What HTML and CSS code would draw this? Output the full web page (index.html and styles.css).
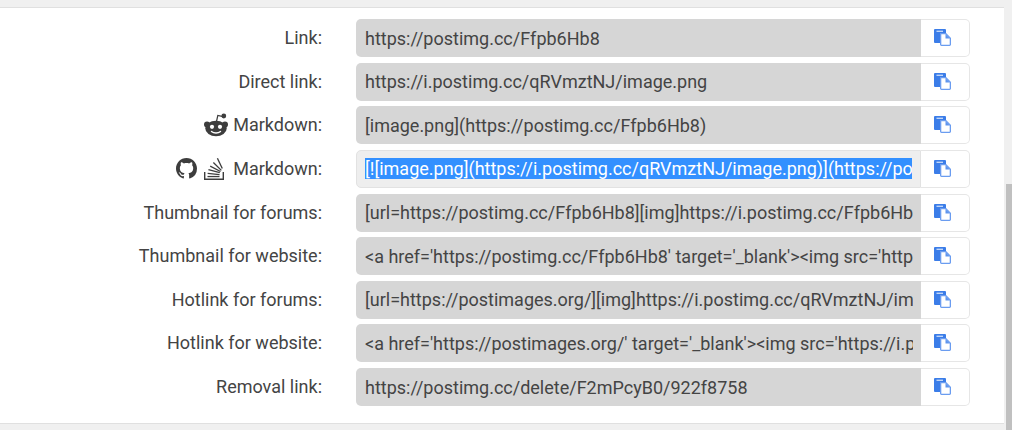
FILE: index.html
```html
<!DOCTYPE html>
<html lang="en">
<head>
<meta charset="utf-8">
<title>Links</title>
<link rel="stylesheet" href="styles.css">
</head>
<body>
<svg class="defs" width="0" height="0" aria-hidden="true">
  <symbol id="copy" viewBox="0 0 17 17">
    <path fill="#3b7de8" d="M1 0h10a1 1 0 0 1 1 1v3H6v10H1a1 1 0 0 1-1-1V1a1 1 0 0 1 1-1z"/>
    <rect x="2.500" y="1.700" width="6.500" height="1.100" fill="#e3edfc"/>
    <path fill="#fff" stroke="#6a9cf0" stroke-width="1.300" d="M6.650 4.650h5.200l4.500 4.500v6.400a.8.800 0 0 1-.8.800H7.450a.8.800 0 0 1-.8-.8z"/>
    <path fill="#5f95ee" d="M11.500 5v4.600h4.600z"/>
  </symbol>
</svg>
<main class="panel">
  <div class="row">
    <label class="name">Link:</label>
    <div class="field"><span class="value">https://postimg.cc/Ffpb6Hb8</span></div>
    <button class="copy"><svg class="copy-icon"><use href="#copy"/></svg></button>
  </div>
  <div class="row">
    <label class="name">Direct link:</label>
    <div class="field"><span class="value">https://i.postimg.cc/qRVmztNJ/image.png</span></div>
    <button class="copy"><svg class="copy-icon"><use href="#copy"/></svg></button>
  </div>
  <div class="row">
    <label class="name">
      <svg class="brand reddit" viewBox="0 0 24 24">
        <g fill="#3d3d3d">
          <circle cx="3" cy="11.500" r="3"/>
          <circle cx="21" cy="11.500" r="3"/>
          <ellipse cx="12" cy="15.500" rx="10.700" ry="7.800"/>
          <circle cx="19.800" cy="3" r="2.400"/>
        </g>
        <path fill="none" stroke="#3d3d3d" stroke-width="1.200" d="M12.500 8.500l1.300-6 5.500 1.100"/>
        <circle cx="8" cy="13.800" r="2.100" fill="#fff"/>
        <circle cx="16" cy="13.800" r="2.100" fill="#fff"/>
        <path fill="none" stroke="#fff" stroke-width="1.400" stroke-linecap="round" d="M7.500 18.500c2.500 2 6.500 2 9 0"/>
      </svg>
      <span>Markdown:</span>
    </label>
    <div class="field"><span class="value">[image.png](https://postimg.cc/Ffpb6Hb8)</span></div>
    <button class="copy"><svg class="copy-icon"><use href="#copy"/></svg></button>
  </div>
  <div class="row">
    <label class="name">
      <svg class="brand github" viewBox="0 0 16 16"><path fill="#3d3d3d" d="M8 0C3.580 0 0 3.580 0 8c0 3.540 2.290 6.530 5.470 7.590.4.070.55-.17.55-.38 0-.19-.01-.82-.01-1.490-2.010.37-2.530-.49-2.690-.94-.09-.23-.48-.94-.82-1.130-.28-.15-.68-.52-.01-.53.63-.01 1.080.58 1.230.82.720 1.210 1.870.87 2.330.66.070-.52.280-.87.510-1.070-1.780-.2-3.640-.89-3.640-3.950 0-.87.310-1.590.820-2.150-.08-.2-.36-1.020.08-2.120 0 0 .67-.21 2.200.82.640-.18 1.320-.27 2-.27s1.360.09 2 .27c1.530-1.040 2.200-.82 2.200-.82.440 1.100.16 1.920.08 2.120.51.560.82 1.270.82 2.150 0 3.070-1.870 3.750-3.650 3.950.29.250.54.730.54 1.480 0 1.070-.01 1.930-.01 2.200 0 .21.150.46.550.38A8.010 8.010 0 0 0 16 8c0-4.420-3.580-8-8-8z"/></svg>
      <svg class="brand stack" viewBox="0 0 20 23"><g fill="#3d3d3d"><path d="M0 15h1.400v6.600h17.200V15H20v8H0z"/><path d="M3.500 18.900h12v1.300h-12z"/><path d="M3.700 15.700l11.900 1.300-.15 1.300-11.900-1.300z"/><path d="M4.600 12l11.400 3-.35 1.300-11.400-3z"/><path d="M6.500 8.500l10.300 5.400-.6 1.150-10.300-5.400z"/><path d="M9.800 5l8 7.900-.9.950-8-7.900z"/><path d="M14 1l4.900 10.300-1.200.55L12.800 1.550z"/></g></svg>
      <span>Markdown:</span>
    </label>
    <div class="field selected"><span class="value"><span class="hl">[![image.png](https://i.postimg.cc/qRVmztNJ/image.png)](https://postimg.cc/Ffpb6Hb8)</span></span></div>
    <button class="copy"><svg class="copy-icon"><use href="#copy"/></svg></button>
  </div>
  <div class="row">
    <label class="name">Thumbnail for forums:</label>
    <div class="field"><span class="value">[url=https://postimg.cc/Ffpb6Hb8][img]https://i.postimg.cc/Ffpb6Hb8/image.png[/img][/url]</span></div>
    <button class="copy"><svg class="copy-icon"><use href="#copy"/></svg></button>
  </div>
  <div class="row">
    <label class="name">Thumbnail for website:</label>
    <div class="field"><span class="value">&lt;a href='https://postimg.cc/Ffpb6Hb8' target='_blank'&gt;&lt;img src='https://i.postimg.cc/qRVmztNJ/image.png'/&gt;&lt;/a&gt;</span></div>
    <button class="copy"><svg class="copy-icon"><use href="#copy"/></svg></button>
  </div>
  <div class="row">
    <label class="name">Hotlink for forums:</label>
    <div class="field"><span class="value">[url=https://postimages.org/][img]https://i.postimg.cc/qRVmztNJ/image.png[/img][/url]</span></div>
    <button class="copy"><svg class="copy-icon"><use href="#copy"/></svg></button>
  </div>
  <div class="row">
    <label class="name">Hotlink for website:</label>
    <div class="field"><span class="value">&lt;a href='https://postimages.org/' target='_blank'&gt;&lt;img src='https://i.postimg.cc/qRVmztNJ/image.png'/&gt;&lt;/a&gt;</span></div>
    <button class="copy"><svg class="copy-icon"><use href="#copy"/></svg></button>
  </div>
  <div class="row">
    <label class="name">Removal link:</label>
    <div class="field"><span class="value">https://postimg.cc/delete/F2mPcyB0/922f8758</span></div>
    <button class="copy"><svg class="copy-icon"><use href="#copy"/></svg></button>
  </div>
</main>
<div class="scrollbar"></div>
</body>
</html>
```
FILE: styles.css
```css
* { box-sizing: border-box; }
html, body { height: 100%; }
body {
  margin: 0;
  background: #f0f0f0;
  font-family: Roboto, "Liberation Sans", sans-serif;
  color: #444;
  overflow: hidden;
  padding-top: 7px;
}
.defs { position: absolute; }
.panel {
  width: 1004px;
  height: 417px;
  background: #fff;
  border-top: 1px solid #e0e0e0;
  border-bottom: 1px solid #e0e0e0;
  padding-top: 11px;
  display: flex;
  flex-direction: column;
  gap: 5.650px;
}
.row {
  display: flex;
  align-items: stretch;
  height: 38px;
  flex: none;
}
.name {
  width: 322px;
  margin-right: 34px;
  padding-bottom: 1px;
  display: flex;
  justify-content: flex-end;
  align-items: center;
  gap: 5px;
  font-size: 18px;
  white-space: nowrap;
}
.field {
  width: 565px;
  background: #d6d6d6;
  border-radius: 5px 0 0 5px;
  padding: 1px 8px 0 9px;
  display: flex;
  align-items: center;
  font-size: 18px;
  line-height: 24px;
  overflow: hidden;
}
.field.selected {
  background: #eee;
  border: 1px solid #e2e2e2;
  padding-left: 8px;
}
.value { white-space: nowrap; overflow: hidden; display: block; }
.hl { background: #3390ff; color: #fff; }
.copy {
  width: 49px;
  padding: 0 6px 1px 0;
  background: #fff;
  border: 1px solid #e6e6e6;
  border-left: 0;
  border-radius: 0 5px 5px 0;
  display: flex;
  align-items: center;
  justify-content: center;
}
.copy-icon { width: 17px; height: 17px; }
.brand { flex: none; }
.reddit { width: 24px; height: 24px; }
.github { width: 21px; height: 21px; margin-right: 2px; }
.stack { width: 20px; height: 23px; margin-right: 4px; }
.scrollbar {
  position: absolute;
  top: 184px;
  right: 0;
  width: 6px;
  height: 246px;
  background: #c0c0c0;
}
```
